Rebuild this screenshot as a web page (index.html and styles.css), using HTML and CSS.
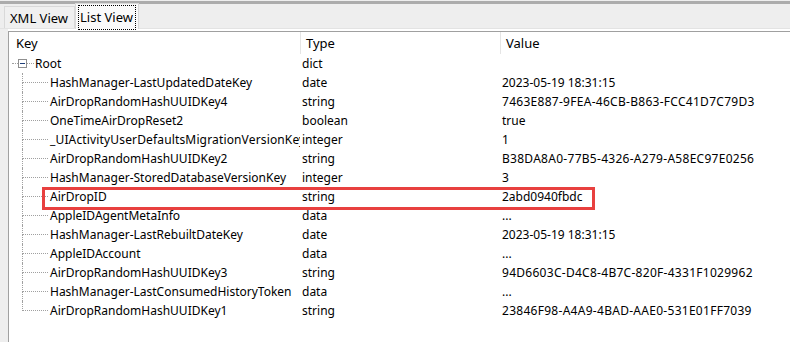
FILE: index.html
```html
<!DOCTYPE html>
<html lang="en">
<head>
    <meta charset="UTF-8">
    <title>Plist Viewer</title>
    <link rel="stylesheet" href="styles.css">
</head>
<body>
    <div class="window">
        <div class="tabbar">
            <div class="tab">XML View</div>
            <div class="tab active"><span class="focus">List View</span></div>
        </div>
        <div class="gap"></div>
        <div class="panel">
            <div class="row header">
                <div class="cell key">Key</div>
                <div class="cell">Type</div>
                <div class="cell">Value</div>
            </div>
            <div class="row">
                <div class="cell key root">
                    <span class="dash short"></span>
                    <svg class="toggle" width="9" height="9" viewBox="0 0 9 9"><rect x="0.5" y="0.5" width="8" height="8" fill="#fff" stroke="#8f8f8f"/><path d="M2 4.5h5" stroke="#1f3f7a"/></svg>
                    <span class="dash mid"></span>
                    <span class="name">Root</span>
                </div>
                <div class="cell">dict</div>
                <div class="cell"></div>
            </div>
            <div class="row child">
                <div class="cell key"><span class="guide"><span class="top"></span><span class="bottom"></span></span><span class="name">HashManager-LastUpdatedDateKey</span></div>
                <div class="cell">date</div>
                <div class="cell">2023-05-19 18:31:15</div>
            </div>
            <div class="row child">
                <div class="cell key"><span class="guide"><span class="top"></span><span class="bottom"></span></span><span class="name">AirDropRandomHashUUIDKey4</span></div>
                <div class="cell">string</div>
                <div class="cell uuid">7463E887-9FEA-46CB-B863-FCC41D7C79D3</div>
            </div>
            <div class="row child">
                <div class="cell key"><span class="guide"><span class="top"></span><span class="bottom"></span></span><span class="name">OneTimeAirDropReset2</span></div>
                <div class="cell">boolean</div>
                <div class="cell">true</div>
            </div>
            <div class="row child">
                <div class="cell key"><span class="guide"><span class="top"></span><span class="bottom"></span></span><span class="name wide">_UIActivityUserDefaultsMigrationVersionKey</span></div>
                <div class="cell">integer</div>
                <div class="cell">1</div>
            </div>
            <div class="row child">
                <div class="cell key"><span class="guide"><span class="top"></span><span class="bottom"></span></span><span class="name">AirDropRandomHashUUIDKey2</span></div>
                <div class="cell">string</div>
                <div class="cell uuid">B38DA8A0-77B5-4326-A279-A58EC97E0256</div>
            </div>
            <div class="row child">
                <div class="cell key"><span class="guide"><span class="top"></span><span class="bottom"></span></span><span class="name">HashManager-StoredDatabaseVersionKey</span></div>
                <div class="cell">integer</div>
                <div class="cell">3</div>
            </div>
            <div class="row child marked">
                <div class="cell key"><span class="guide"><span class="top"></span><span class="bottom"></span></span><span class="name">AirDropID</span></div>
                <div class="cell">string</div>
                <div class="cell">2abd0940fbdc</div>
                <div class="highlight"></div>
            </div>
            <div class="row child">
                <div class="cell key"><span class="guide"><span class="top"></span><span class="bottom"></span></span><span class="name">AppleIDAgentMetaInfo</span></div>
                <div class="cell">data</div>
                <div class="cell">...</div>
            </div>
            <div class="row child">
                <div class="cell key"><span class="guide"><span class="top"></span><span class="bottom"></span></span><span class="name">HashManager-LastRebuiltDateKey</span></div>
                <div class="cell">date</div>
                <div class="cell">2023-05-19 18:31:15</div>
            </div>
            <div class="row child">
                <div class="cell key"><span class="guide"><span class="top"></span><span class="bottom"></span></span><span class="name">AppleIDAccount</span></div>
                <div class="cell">data</div>
                <div class="cell">...</div>
            </div>
            <div class="row child">
                <div class="cell key"><span class="guide"><span class="top"></span><span class="bottom"></span></span><span class="name">AirDropRandomHashUUIDKey3</span></div>
                <div class="cell">string</div>
                <div class="cell uuid">94D6603C-D4C8-4B7C-820F-4331F1029962</div>
            </div>
            <div class="row child">
                <div class="cell key"><span class="guide"><span class="top"></span><span class="bottom"></span></span><span class="name">HashManager-LastConsumedHistoryToken</span></div>
                <div class="cell">data</div>
                <div class="cell">...</div>
            </div>
            <div class="row child last">
                <div class="cell key"><span class="guide"><span class="top"></span><span class="bottom"></span></span><span class="name">AirDropRandomHashUUIDKey1</span></div>
                <div class="cell">string</div>
                <div class="cell uuid">23846F98-A4A9-4BAD-AAE0-531E01FF7039</div>
            </div>
        </div>
    </div>
</body>
</html>
```

FILE: styles.css
```css
body {
    margin: 0;
    background: #eeeeee;
    font-family: "Noto Sans", "Liberation Sans", sans-serif;
    font-size: 12px;
    color: #000;
}
.window {
    height: 342px;
    overflow: hidden;
    padding-top: 1px;
    box-sizing: border-box;
}
.tabbar {
    border-top: 3px solid #acacac;
    height: 24px;
    border-bottom: 1px solid #e3e3e3;
    display: flex;
    align-items: flex-end;
    padding-left: 4px;
}
.tab {
    height: 21px;
    padding: 0 6px 0 5px;
    border: 1px solid #d9d9d9;
    border-bottom: none;
    background: #f0f0f0;
    display: flex;
    align-items: center;
    font-size: 13px;
}
.tab.active {
    height: 25px;
    margin-bottom: -1px;
    background: #fafafa;
    padding: 0 2px;
    align-items: flex-start;
}
.focus {
    border: 1px dotted #000;
    padding: 2px 2px 3px 1px;
    margin-top: 1px;
}
.gap {
    height: 2px;
    background: #fff;
    margin-left: 8px;
}
.panel {
    margin-left: 8px;
    border-left: 1px solid #a0a0a0;
    border-top: 1px solid #a0a0a0;
    background: #fff;
    height: 320px;
}
.row {
    display: grid;
    grid-template-columns: 291px 200px 1fr;
    height: 19px;
    align-items: stretch;
    position: relative;
}
.cell {
    white-space: nowrap;
    overflow: hidden;
    display: flex;
    align-items: center;
    padding-left: 2px;
}
.uuid {
    letter-spacing: 0.28px;
}
.header {
    height: 22px;
}
.header .cell {
    padding-left: 5px;
    border-left: 1px solid #e5e5e5;
    font-size: 13px;
}
.header .cell.key {
    border-left: none;
    padding-left: 7px;
}
.key {
    padding-left: 3px;
}
.dash {
    height: 0;
    border-top: 1px dotted #a0a0a0;
}
.dash.short {
    width: 6px;
}
.dash.mid {
    width: 7px;
}
.toggle {
    flex: none;
}
.root .name {
    margin-left: 1px;
}
.child .key {
    padding-left: 13px;
}
.guide {
    width: 26px;
    height: 100%;
    display: flex;
    flex-direction: column;
    flex: none;
}
.guide .top {
    height: 9px;
    border-left: 1px dotted #a0a0a0;
    border-bottom: 1px dotted #a0a0a0;
}
.guide .bottom {
    flex: 1;
    border-left: 1px dotted #a0a0a0;
}
.last .guide .bottom {
    border-left: none;
}
.name {
    margin-left: 2px;
}
.name.wide {
    letter-spacing: 0.15px;
}
.highlight {
    position: absolute;
    left: 33px;
    top: 0;
    width: 553px;
    height: 23px;
    box-sizing: border-box;
    border: 3px solid #e8403f;
    pointer-events: none;
}
```
